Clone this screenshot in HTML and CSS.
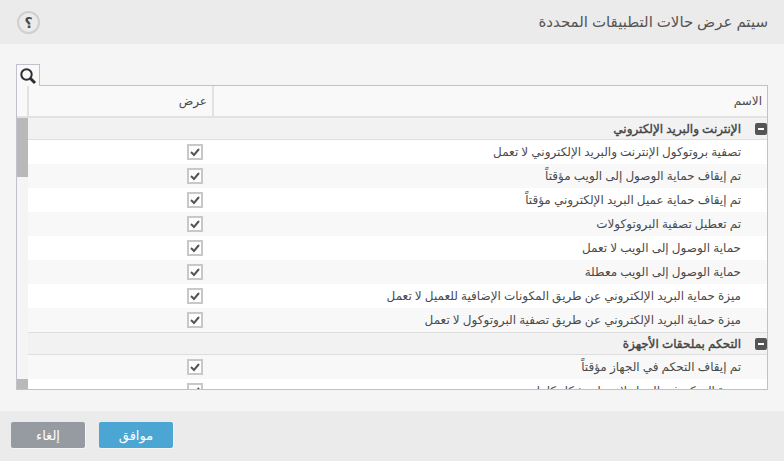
FILE: index.html
```html
<!DOCTYPE html>
<html lang="ar" dir="rtl">
<head>
    <meta charset="UTF-8">
    <title>سيتم عرض حالات التطبيقات المحددة</title>
    <link rel="stylesheet" href="styles.css">
</head>
<body>
    <header class="top">
        <h1>سيتم عرض حالات التطبيقات المحددة</h1>
        <span class="help">؟</span>
    </header>

    <main class="content">
        <div class="tab">
            <svg width="18" height="18" viewBox="0 0 18 18">
                <circle cx="7.5" cy="7.5" r="5.2" fill="none" stroke="#2e2e2e" stroke-width="2"/>
                <path d="M11.5 11.5L16 16" stroke="#2e2e2e" stroke-width="3"/>
            </svg>
        </div>
        <div class="table">
            <div class="head">
                <div class="h-name">الاسم</div>
                <div class="h-show">عرض</div>
                <div class="h-gutter"></div>
            </div>
            <div class="body">
                <div class="rows">
                    <div class="group"><span class="minus"></span>الإنترنت والبريد الإلكتروني</div>
                    <div class="row"><div class="name">تصفية بروتوكول الإنترنت والبريد الإلكتروني لا تعمل</div><div class="show"><span class="check"><svg width="12" height="12" viewBox="0 0 12 12"><path d="M2 6l3 3 5-6" fill="none" stroke="#555" stroke-width="2"/></svg></span></div></div>
                    <div class="row alt"><div class="name">تم إيقاف حماية الوصول إلى الويب مؤقتاً</div><div class="show"><span class="check"><svg width="12" height="12" viewBox="0 0 12 12"><path d="M2 6l3 3 5-6" fill="none" stroke="#555" stroke-width="2"/></svg></span></div></div>
                    <div class="row"><div class="name">تم إيقاف حماية عميل البريد الإلكتروني مؤقتاً</div><div class="show"><span class="check"><svg width="12" height="12" viewBox="0 0 12 12"><path d="M2 6l3 3 5-6" fill="none" stroke="#555" stroke-width="2"/></svg></span></div></div>
                    <div class="row alt"><div class="name">تم تعطيل تصفية البروتوكولات</div><div class="show"><span class="check"><svg width="12" height="12" viewBox="0 0 12 12"><path d="M2 6l3 3 5-6" fill="none" stroke="#555" stroke-width="2"/></svg></span></div></div>
                    <div class="row"><div class="name">حماية الوصول إلى الويب لا تعمل</div><div class="show"><span class="check"><svg width="12" height="12" viewBox="0 0 12 12"><path d="M2 6l3 3 5-6" fill="none" stroke="#555" stroke-width="2"/></svg></span></div></div>
                    <div class="row alt"><div class="name">حماية الوصول إلى الويب معطلة</div><div class="show"><span class="check"><svg width="12" height="12" viewBox="0 0 12 12"><path d="M2 6l3 3 5-6" fill="none" stroke="#555" stroke-width="2"/></svg></span></div></div>
                    <div class="row"><div class="name">ميزة حماية البريد الإلكتروني عن طريق المكونات الإضافية للعميل لا تعمل</div><div class="show"><span class="check"><svg width="12" height="12" viewBox="0 0 12 12"><path d="M2 6l3 3 5-6" fill="none" stroke="#555" stroke-width="2"/></svg></span></div></div>
                    <div class="row alt"><div class="name">ميزة حماية البريد الإلكتروني عن طريق تصفية البروتوكول لا تعمل</div><div class="show"><span class="check"><svg width="12" height="12" viewBox="0 0 12 12"><path d="M2 6l3 3 5-6" fill="none" stroke="#555" stroke-width="2"/></svg></span></div></div>
                    <div class="group"><span class="minus"></span>التحكم بملحقات الأجهزة</div>
                    <div class="row alt"><div class="name">تم إيقاف التحكم في الجهاز مؤقتاً</div><div class="show"><span class="check"><svg width="12" height="12" viewBox="0 0 12 12"><path d="M2 6l3 3 5-6" fill="none" stroke="#555" stroke-width="2"/></svg></span></div></div>
                    <div class="row"><div class="name">ميزة التحكم في الجهاز لا تعمل بشكل كامل</div><div class="show"><span class="check"><svg width="12" height="12" viewBox="0 0 12 12"><path d="M2 6l3 3 5-6" fill="none" stroke="#555" stroke-width="2"/></svg></span></div></div>
                </div>
                <div class="scroll">
                    <div class="thumb-top"></div>
                    <div class="thumb-bottom"></div>
                </div>
            </div>
        </div>
    </main>

    <footer class="bottom">
        <button class="btn ok">موافق</button>
        <button class="btn cancel">إلغاء</button>
    </footer>
</body>
</html>
```

FILE: styles.css
```css
* {
    box-sizing: border-box;
}
html, body {
    height: 100%;
}
body {
    margin: 0;
    display: flex;
    flex-direction: column;
    overflow: hidden;
    font-family: "Noto Sans", "DejaVu Sans", sans-serif;
    font-size: 12px;
    color: #4a4a4a;
    background-color: #f5f5f5;
}
.top {
    height: 44px;
    flex: none;
    display: flex;
    align-items: center;
    justify-content: space-between;
    padding: 0 16px 0 17px;
    background-color: #ebebeb;
}
.top h1 {
    margin: 0 0 3px;
    font-size: 15px;
    font-weight: normal;
    color: #555;
}
.help {
    width: 23px;
    height: 23px;
    display: flex;
    align-items: center;
    justify-content: center;
    border: 2px solid #cfcfcf;
    border-radius: 50%;
    font-size: 14px;
    font-weight: bold;
}
.content {
    flex: 1;
    min-height: 0;
    padding: 20px 16px 21px;
    display: flex;
    flex-direction: column;
    align-items: flex-end;
}
.tab {
    width: 24px;
    height: 22px;
    margin-bottom: -1px;
    position: relative;
    z-index: 1;
    display: flex;
    align-items: center;
    justify-content: center;
    border: 1px solid #c2c0cc;
    border-bottom: none;
    background-color: #f9f9f9;
}
.table {
    width: 752px;
    flex: 1;
    min-height: 0;
    display: flex;
    flex-direction: column;
    border: 1px solid #c2c0cc;
    background-color: #fff;
}
.head {
    height: 32px;
    flex: none;
    display: flex;
    background-color: #f9f9f9;
    border-bottom: 2px solid #e2e2e2;
}
.h-name {
    flex: 1;
    padding: 6px 5px 0 0;
}
.h-show {
    width: 187px;
    padding: 6px 5px 0 0;
    border-right: 2px solid #e2e2e2;
    border-left: 2px solid #e2e2e2;
}
.h-gutter {
    width: 10px;
}
.body {
    flex: 1;
    min-height: 0;
    display: flex;
}
.rows {
    flex: 1;
    min-width: 0;
    overflow: hidden;
}
.group {
    height: 22px;
    display: flex;
    align-items: center;
    gap: 14px;
    font-weight: normal;
    -webkit-text-stroke: 0.4px #444;
    color: #444;
    background-color: #f2f2f2;
    border-bottom: 1px solid #dedede;
}
.row + .group {
    height: 23px;
    border-top: 1px solid #dedede;
}
.minus {
    width: 12px;
    height: 12px;
    display: flex;
    align-items: center;
    justify-content: center;
    border-radius: 2px;
    background-color: #555;
}
.minus::before {
    content: "";
    width: 6px;
    height: 2px;
    background-color: #fff;
}
.row {
    height: 24px;
    display: flex;
    align-items: center;
    background-color: #fff;
}
.row.alt {
    background-color: #f8f8f8;
}
.name {
    flex: 1;
    padding: 0 26px 1px 0;
}
.show {
    width: 185px;
    padding: 0 10px 1px 0;
    display: flex;
}
.check {
    width: 16px;
    height: 16px;
    display: flex;
    align-items: center;
    justify-content: center;
    border: 2px solid #c8c8c8;
    background-color: #fff;
}
.scroll {
    width: 11px;
    flex: none;
    display: flex;
    flex-direction: column;
    justify-content: space-between;
    background-color: #f5f5f5;
}
.thumb-top {
    height: 59px;
    background-color: #b9b9b9;
}
.thumb-bottom {
    height: 10px;
    background-color: #b9b9b9;
}
.bottom {
    height: 50px;
    flex: none;
    display: flex;
    justify-content: flex-end;
    align-items: center;
    gap: 14px;
    padding: 0 11px 2px;
    background-color: #ebebeb;
}
.btn {
    width: 74px;
    height: 26px;
    padding: 0;
    border: none;
    border-radius: 2px;
    box-shadow: 1px 1px 0 #f5f5f5;
    color: #fff;
    font-family: inherit;
    font-size: 13px;
}
.ok {
    background-color: #4ba6d4;
}
.cancel {
    background-color: #959ba1;
}
```
